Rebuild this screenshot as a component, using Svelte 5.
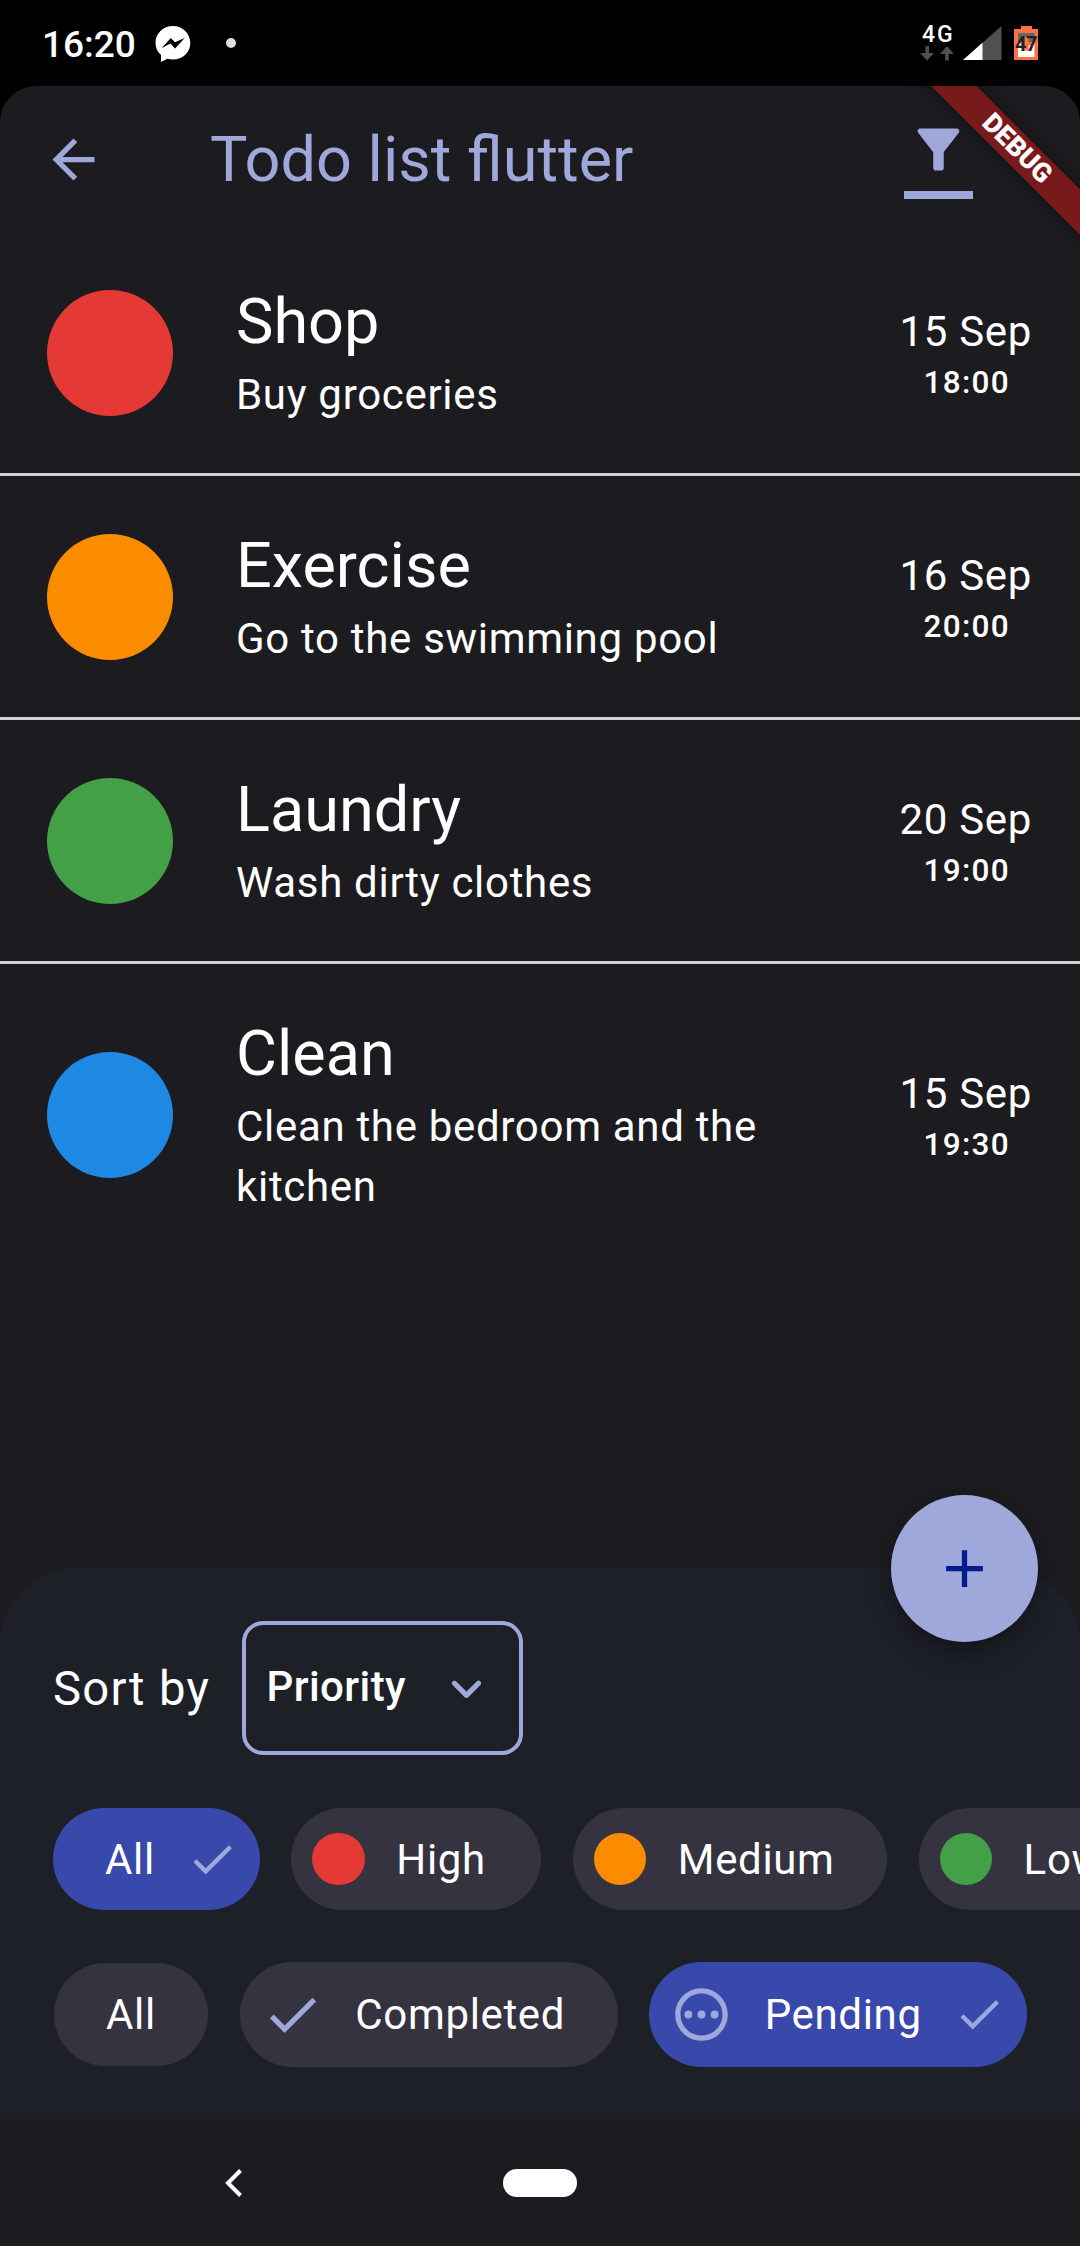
<script>
  const tasks = [
    { title: 'Shop', note: 'Buy groceries', date: '15 Sep', time: '18:00', tone: 'red' },
    { title: 'Exercise', note: 'Go to the swimming pool', date: '16 Sep', time: '20:00', tone: 'orange' },
    { title: 'Laundry', note: 'Wash dirty clothes', date: '20 Sep', time: '19:00', tone: 'green' },
    { title: 'Clean', note: 'Clean the bedroom and the kitchen', date: '15 Sep', time: '19:30', tone: 'blue' }
  ];
  const priorities = [
    { label: 'High', tone: 'red' },
    { label: 'Medium', tone: 'orange' },
    { label: 'Low', tone: 'green' }
  ];
</script>

{#snippet check(size)}
  <svg class="icon" width={size} height={size} viewBox="0 0 24 24"><path d="M9 16.17L4.83 12l-1.42 1.41L9 19 21 7l-1.41-1.41z" /></svg>
{/snippet}

<div class="phone">
  <header class="status">
    <span class="clock">16:20</span>
    <svg class="messenger" width="36" height="37" viewBox="0 0 36 37">
      <path d="M18 0C8 0 .5 7.400.5 17c0 4.800 2 9 5.500 12v7l6.200-3.200c1.800.5 3.700.7 5.800.7 9.800 0 17.300-7.200 17.300-16.500S27.800 0 18 0z" fill="#fff" />
      <path d="M6.500 22.200l9.300-10.200 4.200 4.300 9.700-4.300-9.600 10.400-4.700-4.900z" fill="#000" />
    </svg>
    <span class="dot"></span>
    <div class="network">
      <span class="gen">4G</span>
      <svg width="34" height="15" viewBox="0 0 34 15" fill="#505050"><path d="M5.500 0h3.500v7h5L7.200 14.500.200 7h5.300zM25.200 14.500h3.500V8h5.200L27 .200 20 8h5.200z" /></svg>
    </div>
    <svg class="signal" width="39" height="35" viewBox="0 0 39 35"><path d="M38.500 0v34H0z" fill="#505050" /><path d="M19.500 16.800V34H0z" fill="#fff" /></svg>
    <div class="battery">
      <svg width="24" height="34" viewBox="0 0 24 34">
        <path d="M7 0h11v3h6v31H0V3h7z" fill="#ff7043" />
        <path d="M4 7h16.500v10H4z" fill="#666" />
        <path d="M4 17h16.500v14H4z" fill="#fff" />
        <path d="M10.500 11h4v5h4v3.500h-4v5h-4v-5h-4V16h4z" fill="#ff7043" />
      </svg>
      <span>47</span>
    </div>
  </header>

  <main class="app">
    <div class="ribbon-clip"><div class="ribbon">DEBUG</div></div>
    <div class="appbar">
      <svg class="icon" width="63" height="63" viewBox="0 0 24 24"><path d="M20 11H7.830l5.590-5.590L12 4l-8 8 8 8 1.410-1.410L7.830 13H20z" /></svg>
      <h1>Todo list flutter</h1>
      <div class="filter">
        <svg class="icon" width="63" height="63" viewBox="0 0 24 24"><path d="M4.250 5.610C6.270 8.200 10 13 10 13v6c0 .55.45 1 1 1h2c.55 0 1-.45 1-1v-6s3.720-4.800 5.740-7.390c.51-.66.04-1.610-.79-1.610H5.040c-.83 0-1.300.95-.79 1.610z" /></svg>
        <i></i>
      </div>
    </div>

    <ul class="list">
      {#each tasks as task}
        <li>
          <span class="disc {task.tone}"></span>
          <div class="body">
            <h2>{task.title}</h2>
            <p>{task.note}</p>
          </div>
          <div class="when">
            <span class="date">{task.date}</span>
            <span class="time">{task.time}</span>
          </div>
        </li>
      {/each}
    </ul>

    <section class="sheet">
      <button class="fab" aria-label="Add task">
        <svg width="63" height="63" viewBox="0 0 24 24"><path d="M19 13h-6v6h-2v-6H5v-2h6V5h2v6h6z" /></svg>
      </button>
      <div class="sort">
        <span class="sort-label">Sort by</span>
        <div class="select">
          <span>Priority</span>
          <svg class="icon" width="63" height="63" viewBox="0 0 24 24"><path d="M8.120 9.290L12 13.170l3.880-3.880c.39-.39 1.020-.39 1.410 0 .39.39.39 1.020 0 1.410l-4.590 4.590c-.39.39-1.020.39-1.410 0L6.700 10.700c-.39-.39-.39-1.020 0-1.410.39-.38 1.030-.39 1.420 0z" /></svg>
        </div>
      </div>
      <div class="chips priority">
        <span class="chip selected plain">All {@render check(52.5)}</span>
        {#each priorities as p}
          <span class="chip lead"><i class="mark {p.tone}"></i>{p.label}</span>
        {/each}
      </div>
      <div class="chips state">
        <span class="chip plain short">All</span>
        <span class="chip lead">{@render check(63)}Completed</span>
        <span class="chip lead selected">
          <svg class="icon" width="63" height="63" viewBox="0 0 24 24"><path d="M12 2C6.480 2 2 6.480 2 12s4.480 10 10 10 10-4.480 10-10S17.520 2 12 2zm0 18c-4.420 0-8-3.580-8-8s3.580-8 8-8 8 3.580 8 8-3.580 8-8 8z" /><circle cx="7" cy="12" r="1.500" /><circle cx="12" cy="12" r="1.500" /><circle cx="17" cy="12" r="1.500" /></svg>Pending{@render check(52.5)}
        </span>
      </div>
    </section>

    <nav class="system">
      <svg width="18" height="28" viewBox="0 0 18 28"><path d="M15.500 1.500L3 14l12.500 12.500" fill="none" stroke="#fff" stroke-width="4" /></svg>
      <span class="pill"></span>
    </nav>
  </main>
</div>

<style>
  :global(body) { background: #000; }
  .phone { width: 1080px; height: 2246px; background: #000; color: #fff; font-family: Roboto, sans-serif; overflow: hidden; display: flex; flex-direction: column; }
  .phone * { box-sizing: border-box; }
  svg { display: block; flex: none; }
  .icon { fill: #9fa8da; }
  h1, h2, p, ul { margin: 0; padding: 0; font-weight: 400; }

  .status { height: 86px; display: flex; align-items: flex-start; padding: 26px 42px 0 42px; flex: none; }
  .clock { width: 113px; font-size: 37px; font-weight: 500; line-height: 37px; }
  .dot { width: 10px; height: 10px; border-radius: 50%; background: #ddd; margin: 12px 0 0 35px; }
  .network { margin-left: auto; width: 34px; margin-right: 9px; }
  .gen { display: block; font-size: 23px; font-weight: 500; line-height: 17px; height: 20px; letter-spacing: 2px; padding-left: 2px; white-space: nowrap; }
  .signal { margin-right: 12px; }
  .battery { position: relative; width: 24px; height: 34px; }
  .battery span { position: absolute; left: 1px; top: 8px; font-size: 20px; line-height: 20px; font-weight: 700; color: #212121; letter-spacing: -0.5px; }

  .app { position: relative; flex: 1; background: #1c1b1f; border-radius: 36px 36px 0 0; display: flex; flex-direction: column; overflow: hidden; }
  .ribbon-clip { position: absolute; inset: 0 0 auto auto; width: 260px; height: 260px; overflow: hidden; }
  .ribbon { position: absolute; left: 46.5px; top: 46.5px; width: 300px; height: 31.5px; transform: rotate(45deg); background: #7a191b; box-shadow: 0 0 16px rgba(0, 0, 0, 0.5); font-size: 26.8px; font-weight: 900; line-height: 31.5px; text-align: center; }

  .appbar { height: 147px; display: flex; align-items: center; padding: 0 107px 0 42px; flex: none; }
  h1 { margin-left: 105px; flex: 1; font-size: 63px; line-height: 80px; color: #9fa8da; }
  .filter { width: 69px; height: 84px; display: flex; flex-direction: column; align-items: center; }
  .filter i { width: 69px; height: 8px; background: #9fa8da; margin-top: 10px; }

  .list { list-style: none; margin-top: -1px; }
  li { display: flex; align-items: center; padding: 48px 48px 48px 47px; border-bottom: 3px solid #d2d2d3; }
  li:last-child { border: 0; }
  .disc { width: 126px; height: 126px; border-radius: 50%; flex: none; margin-right: 63px; }
  .body { width: 560px; }
  h2 { font-size: 63px; line-height: 84px; margin-bottom: 1px; }
  p { font-size: 42px; line-height: 60px; letter-spacing: 0.690px; }
  .when { margin-left: auto; padding-top: 1px; display: flex; flex-direction: column; align-items: center; }
  .date { font-size: 42px; line-height: 60px; letter-spacing: 0.660px; }
  .time { font-size: 31.500px; line-height: 42px; letter-spacing: 1.310px; font-weight: 500; margin-left: 2px; }

  .red { background: #e53935; }
  .orange { background: #fb8c00; }
  .green { background: #43a047; }
  .blue { background: #1e88e5; }

  .sheet { position: relative; margin-top: auto; height: 551px; flex: none; background: #1e2028; border-radius: 75px 75px 0 0; padding-top: 53px; }
  .fab { position: absolute; right: 42px; top: -73px; width: 147px; height: 147px; border: 0; padding: 0; border-radius: 50%; background: #9fa8da; display: grid; place-items: center; box-shadow: 0 14px 26px rgba(0, 0, 0, 0.200), 0 6px 14px rgba(0, 0, 0, 0.160); }
  .fab svg { fill: #001b8b; }
  .sort { display: flex; align-items: center; height: 134px; padding-left: 53px; }
  .sort-label { width: 188.500px; padding-top: 1px; font-size: 47.250px; letter-spacing: 1.310px; }
  .select { width: 281px; height: 134px; border: 4px solid #9fa8da; border-radius: 21px; display: flex; align-items: center; justify-content: space-between; padding: 0 21px 4px 21px; font-size: 42px; font-weight: 500; letter-spacing: 0.400px; }
  .select .icon { position: relative; top: 2px; }
  .chips { display: flex; gap: 31.500px; align-items: center; padding-left: 52.500px; overflow: hidden; }
  .priority { margin-top: 53px; height: 102px; }
  .state { margin-top: 52px; height: 105px; padding-left: 53.500px; }
  .chip { flex: none; height: 102px; border-radius: 53px; background: #35333f; display: flex; align-items: center; gap: 31.500px; font-size: 42px; letter-spacing: 0.660px; white-space: nowrap; }
  .priority .lead:nth-child(2) { min-width: 250px; }
  .state .chip { height: 105px; }
  .state .short { height: 103px; }
  .chip.plain { padding: 0 52.500px; }
  .chip.lead { padding: 0 52.500px 0 21px; }
  .chip.selected { background: #3949ab; padding-right: 21px; }
  .mark { width: 52.500px; height: 52.500px; border-radius: 50%; }

  .system { height: 127px; flex: none; display: flex; align-items: center; padding-left: 225px; }
  .pill { width: 74px; height: 28px; border-radius: 14px; background: #fff; margin-left: 260px; }
</style>
